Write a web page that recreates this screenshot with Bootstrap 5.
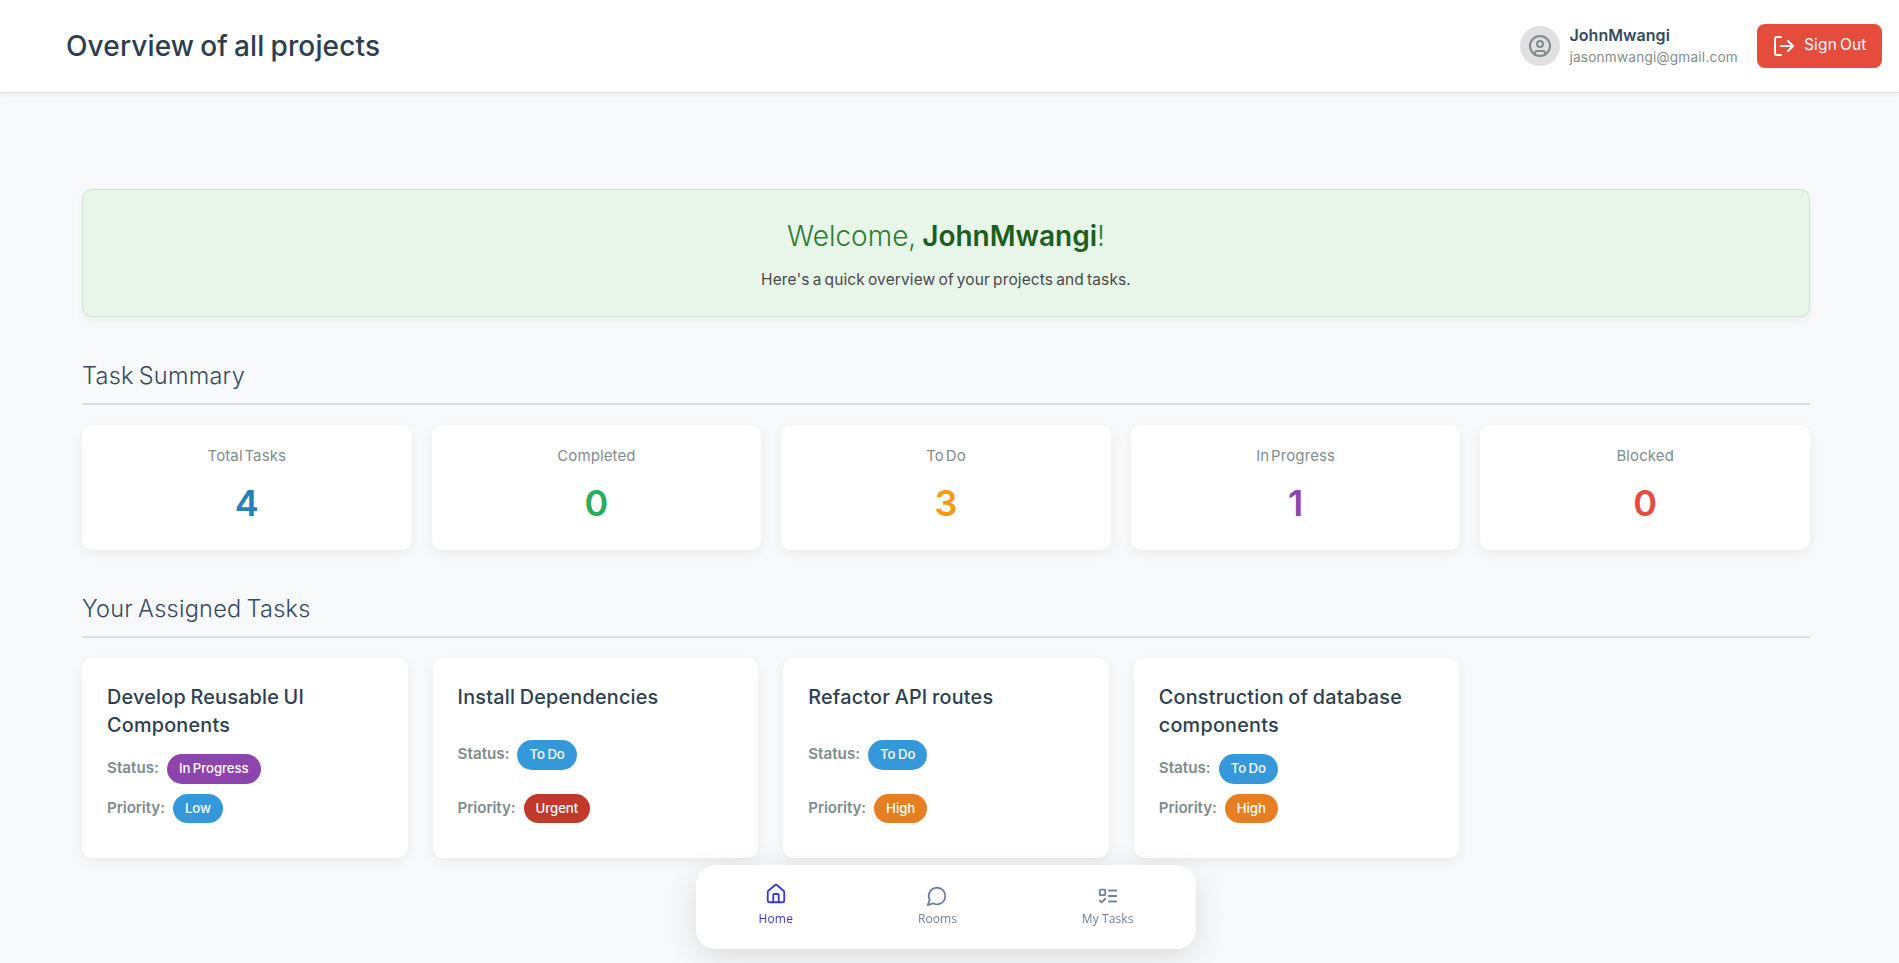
<!DOCTYPE html>
<html lang="en">
<head>
<meta charset="utf-8">
<meta name="viewport" content="width=device-width, initial-scale=1">
<title>Overview of all projects</title>
<link href="https://cdn.jsdelivr.net/npm/bootstrap@5.3.0/dist/css/bootstrap.min.css" rel="stylesheet">
<script src="https://cdn.jsdelivr.net/npm/bootstrap@5.3.0/dist/js/bootstrap.bundle.min.js" defer></script>
<style>
  body { font-family: Inter, "Liberation Sans", sans-serif; background: #f8f9fb; height: 100vh; overflow: hidden; }
  svg { fill: none; stroke: currentColor; stroke-width: 2; stroke-linecap: round; stroke-linejoin: round; flex: none; display: block; }
  .topbar { height: 93px; padding: 0 17px 0 66px; background: #fff; border-bottom: 1px solid #e0e0e0; box-shadow: 0 2px 4px rgba(0,0,0,.05); }
  .topbar h1 { font-size: 28px; font-weight: 500; letter-spacing: .14px; word-spacing: -1.6px; line-height: 1.2; padding-top: 1px; color: #2c3e50; }
  .avatar { width: 40px; height: 40px; background: #e0e0e0; color: #7f8c8d; }
  .user { padding-left: 1px; padding-right: 3px; }
  .user-name { font-size: 16px; font-weight: 600; line-height: 22px; letter-spacing: .05px; color: #34495e; }
  .user-mail { font-size: 13.6px; line-height: 22px; letter-spacing: .22px; color: #7f8c8d; }
  .btn-signout { width: 125px; height: 44px; padding: 0 0 0 15px; border: 0; border-radius: 8px; font-size: 15.5px; letter-spacing: .15px; word-spacing: -1.5px; --bs-btn-bg: #e64c3c; --bs-btn-color: #fff; --bs-btn-hover-bg: #c0392b; --bs-btn-hover-color: #fff; }
  .btn-signout span { padding-bottom: 2px; }
  .content { padding: 96px 89px 0 82px; }
  .welcome { height: 128px; padding-top: 26px; background: #e8f5e9; border: 1px solid #c8e6c9; border-radius: 10px; box-shadow: 0 4px 8px rgba(0,0,0,.05); }
  .welcome h2 { font-size: 28px; font-weight: 300; line-height: 40px; letter-spacing: 0; word-spacing: -2px; color: #2e7d32; margin-bottom: 11px; }
  .welcome strong { font-weight: 600; color: #1b5e20; }
  .welcome p { font-size: 15.5px; line-height: 26px; letter-spacing: .12px; word-spacing: -1.4px; color: #4a4a4a; }
  .section-title { margin: 44px 0 20px; padding-bottom: 12px; border-bottom: 2px solid #dcdfe1; font-size: 23.5px; font-weight: 300; line-height: 30px; letter-spacing: .25px; word-spacing: -1.8px; color: #34495e; }
  .tile { background: #fff; border-radius: 10px; box-shadow: 0 4px 12px rgba(0,0,0,.06); }
  .five { display: grid; grid-template-columns: repeat(5, 1fr); }
  .stats { gap: 20px; }
  .tasks { gap: 25px; }
  .stat { height: 125px; padding-top: 18.5px; }
  .stat-label { font-size: 15px; line-height: 24px; letter-spacing: .1px; word-spacing: -2.5px; color: #7f8c8d; margin-bottom: 13.5px; }
  .stat-value { font-size: 36px; font-weight: 600; line-height: 44px; }
  .task { height: 200px; padding: 25px; }
  .task h3 { font-size: 19.8px; font-weight: 500; line-height: 28px; letter-spacing: .23px; word-spacing: -1px; color: #2c3e50; margin-bottom: 15px; }
  .field { height: 29.5px; margin-bottom: 10px; gap: 8px; font-size: 15.2px; font-weight: 600; color: #7f8c8d; }
  .field-priority { letter-spacing: -.1px; }
  .pill { height: 29.5px; padding: 0 12px; border-radius: 15px; line-height: 29.5px; font-size: 13.2px; font-weight: 500; letter-spacing: -.05px; word-spacing: -1px; color: #fff; }
  .blue { background: #3498db; } .purple { background: #8e44ad; } .red { background: #c0392b; } .orange { background: #e67e22; }
  .dock { left: 696px; bottom: 14px; width: 500px; height: 84px; padding-top: 20px; background: rgba(255,255,255,.98); border-radius: 20px; box-shadow: 0 8px 32px rgba(0,0,0,.12); }
  .dock a { font: 400 12px/16px "Open Sans", sans-serif; letter-spacing: .1px; color: #718096; text-decoration: none; }
  .dock svg { width: 22px; height: 22px; margin-bottom: 4.4px; }
  .dock a.current { color: #3c37d0; font-weight: 500; letter-spacing: .2px; }
  .dock a.current svg { transform: translateY(-2px); }
</style>
</head>
<body>
<header class="topbar d-flex align-items-center justify-content-between">
  <h1 class="mb-0">Overview of all projects</h1>
  <div class="d-flex align-items-center">
    <div class="avatar rounded-circle d-flex align-items-center justify-content-center me-2">
      <svg width="24" height="24" viewBox="0 0 24 24"><circle cx="12" cy="12" r="10"/><circle cx="12" cy="10" r="3"/><path d="M7 20.662V19a2 2 0 0 1 2-2h6a2 2 0 0 1 2 2v1.662"/></svg>
    </div>
    <div class="user me-3">
      <div class="user-name">JohnMwangi</div>
      <div class="user-mail">jasonmwangi@gmail.com</div>
    </div>
    <button type="button" class="btn btn-signout d-flex align-items-center gap-2">
      <svg width="24" height="24" viewBox="0 0 24 24"><path d="M9 21H5a2 2 0 0 1-2-2V5a2 2 0 0 1 2-2h4M16 17l5-5-5-5M21 12H9"/></svg>
      <span>Sign Out</span>
    </button>
  </div>
</header>

<main class="content">
  <section class="welcome text-center">
    <h2>Welcome, <strong>JohnMwangi</strong>!</h2>
    <p class="m-0">Here's a quick overview of your projects and tasks.</p>
  </section>

  <h2 class="section-title">Task Summary</h2>
  <div class="five stats text-center">
    <div class="tile stat"><div class="stat-label">Total Tasks</div><div class="stat-value" style="color:#2980b9">4</div></div>
    <div class="tile stat"><div class="stat-label">Completed</div><div class="stat-value" style="color:#27ae60">0</div></div>
    <div class="tile stat"><div class="stat-label">To Do</div><div class="stat-value" style="color:#f39c12">3</div></div>
    <div class="tile stat"><div class="stat-label">In Progress</div><div class="stat-value" style="color:#8e44ad">1</div></div>
    <div class="tile stat"><div class="stat-label">Blocked</div><div class="stat-value" style="color:#e74c3c">0</div></div>
  </div>

  <h2 class="section-title">Your Assigned Tasks</h2>
  <div class="five tasks">
    <article class="tile task d-flex flex-column justify-content-between">
      <h3>Develop Reusable UI Components</h3>
      <div class="field d-flex align-items-center">Status: <span class="pill purple">In Progress</span></div>
      <div class="field field-priority d-flex align-items-center">Priority: <span class="pill blue">Low</span></div>
    </article>
    <article class="tile task d-flex flex-column justify-content-between">
      <h3>Install Dependencies</h3>
      <div class="field d-flex align-items-center">Status: <span class="pill blue">To Do</span></div>
      <div class="field field-priority d-flex align-items-center">Priority: <span class="pill red">Urgent</span></div>
    </article>
    <article class="tile task d-flex flex-column justify-content-between">
      <h3>Refactor API routes</h3>
      <div class="field d-flex align-items-center">Status: <span class="pill blue">To Do</span></div>
      <div class="field field-priority d-flex align-items-center">Priority: <span class="pill orange">High</span></div>
    </article>
    <article class="tile task d-flex flex-column justify-content-between">
      <h3>Construction of database components</h3>
      <div class="field d-flex align-items-center">Status: <span class="pill blue">To Do</span></div>
      <div class="field field-priority d-flex align-items-center">Priority: <span class="pill orange">High</span></div>
    </article>
  </div>
</main>

<nav class="dock position-fixed d-flex justify-content-around align-items-start">
  <a href="#" class="current d-flex flex-column align-items-center">
    <svg viewBox="0 0 24 24"><path d="M15 21v-8a1 1 0 0 0-1-1h-4a1 1 0 0 0-1 1v8"/><path d="M3 10a2 2 0 0 1 .709-1.528l7-6a2 2 0 0 1 2.582 0l7 6A2 2 0 0 1 21 10v9a2 2 0 0 1-2 2H5a2 2 0 0 1-2-2z"/></svg>
    Home
  </a>
  <a href="#" class="d-flex flex-column align-items-center">
    <svg viewBox="0 0 24 24"><path d="M7.9 20A9 9 0 1 0 4 16.1L2 22Z"/></svg>
    Rooms
  </a>
  <a href="#" class="d-flex flex-column align-items-center">
    <svg viewBox="0 0 24 24"><rect x="3" y="5" width="6" height="6" rx="1"/><path d="m3 17 2 2 4-4M13 6h8M13 12h8M13 18h8"/></svg>
    My Tasks
  </a>
</nav>
</body>
</html>
